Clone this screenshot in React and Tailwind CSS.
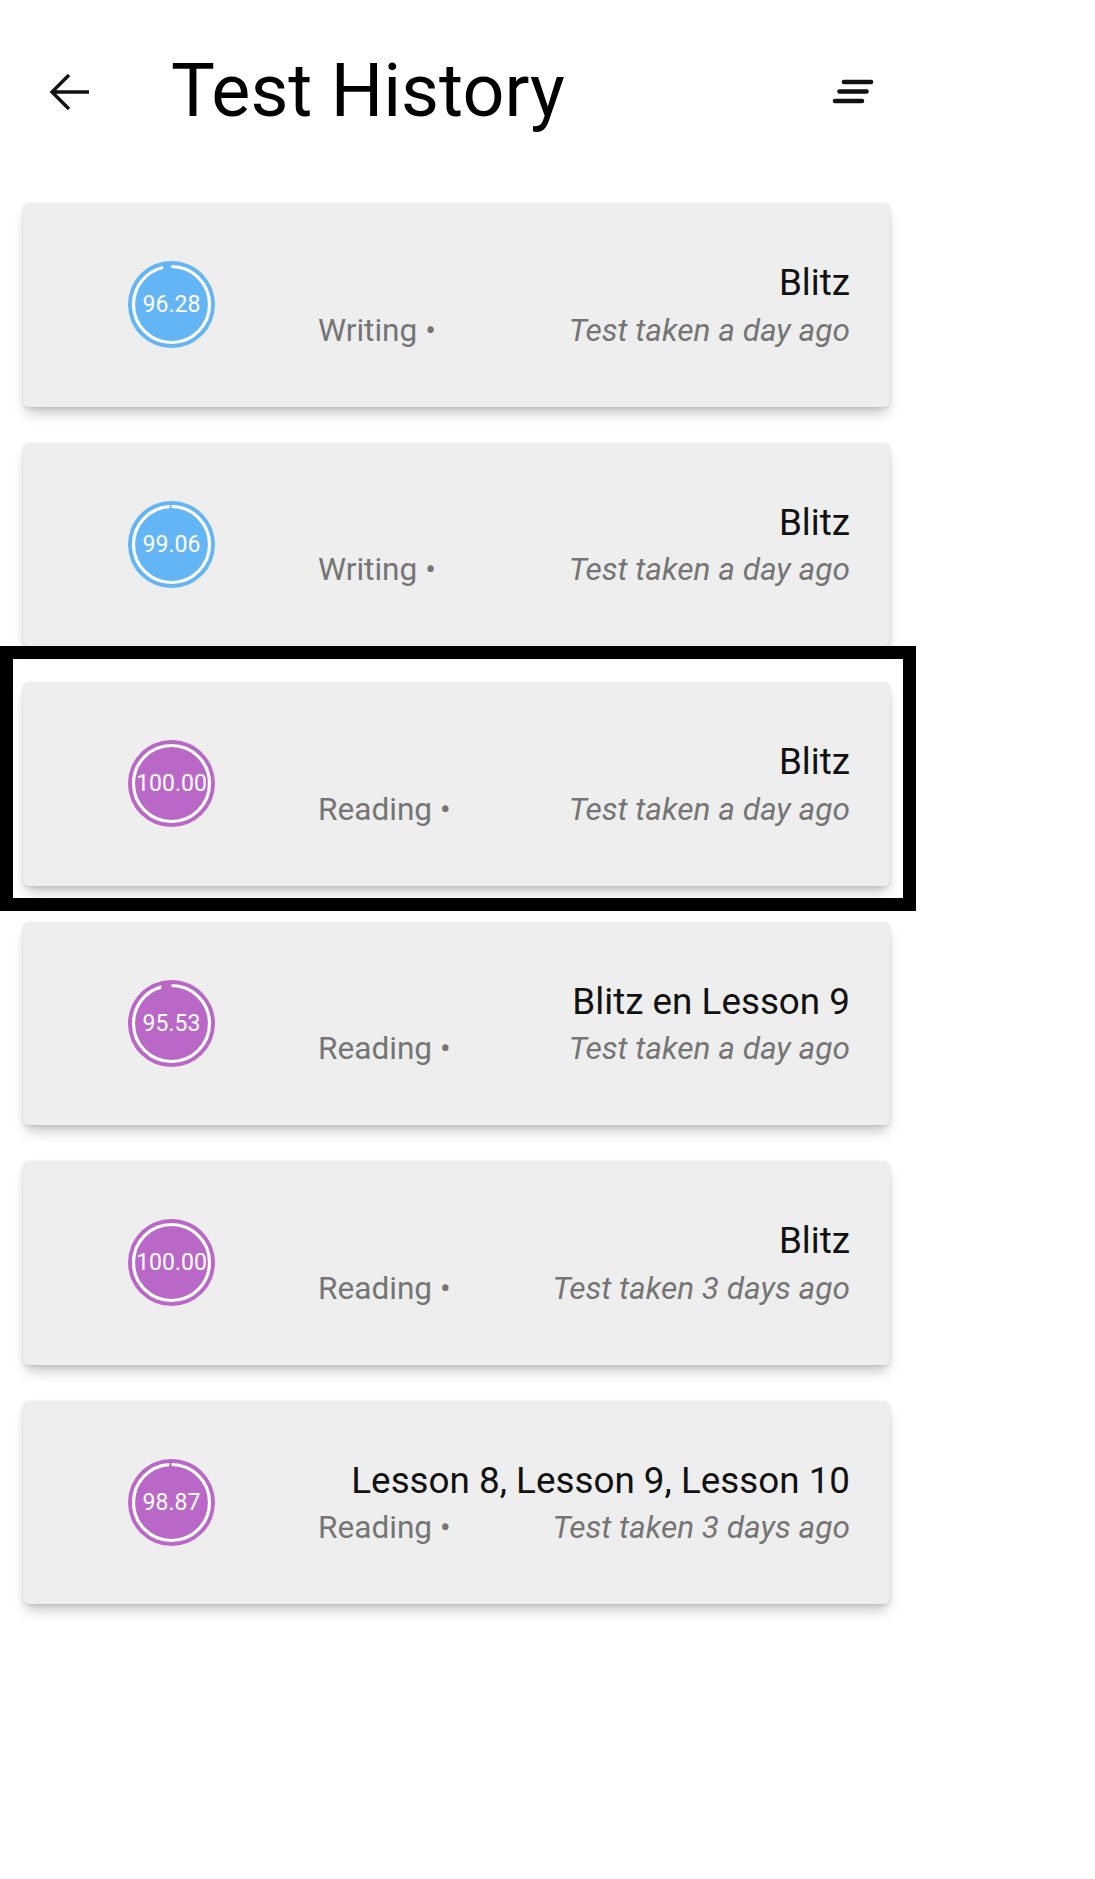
import React from "react";

const BLUE = "#64B5F6";
const PURPLE = "#BA68C8";

const items = [
  { score: "96.28", pct: 96.28, color: BLUE, title: "Blitz", kind: "Writing", when: "Test taken a day ago" },
  { score: "99.06", pct: 99.06, color: BLUE, title: "Blitz", kind: "Writing", when: "Test taken a day ago" },
  { score: "100.00", pct: 100, color: PURPLE, title: "Blitz", kind: "Reading", when: "Test taken a day ago" },
  { score: "95.53", pct: 95.53, color: PURPLE, title: "Blitz en Lesson 9", kind: "Reading", when: "Test taken a day ago" },
  { score: "100.00", pct: 100, color: PURPLE, title: "Blitz", kind: "Reading", when: "Test taken 3 days ago" },
  { score: "98.87", pct: 98.87, color: PURPLE, title: "Lesson 8, Lesson 9, Lesson 10", kind: "Reading", when: "Test taken 3 days ago" },
];

function ScoreCircle({ score, pct, color }) {
  const r = 38;
  const c = 2 * Math.PI * r;
  const len = (pct / 100) * c;
  return (
    <div
      className="relative flex h-[87px] w-[87px] shrink-0 items-center justify-center rounded-full"
      style={{ backgroundColor: color }}
    >
      <svg className="absolute inset-0" width="87" height="87" viewBox="0 0 87 87">
        <circle
          cx="43.5"
          cy="43.5"
          r={r}
          fill="none"
          stroke="#ffffff"
          strokeWidth="3.2"
          strokeDasharray={`${len} ${c}`}
          transform="rotate(-90 43.5 43.5)"
        />
      </svg>
      <span className="relative whitespace-nowrap text-[23px] leading-none text-white">{score}</span>
    </div>
  );
}

function Card({ it }) {
  return (
    <div className="flex h-[203.5px] items-center rounded-[6px] bg-[#eeeeee] pl-[105px] pr-[40px] shadow-[0_9px_13px_-3px_rgba(0,0,0,0.22),0_2px_4px_rgba(0,0,0,0.08),0_0_3px_rgba(0,0,0,0.05)]">
      <ScoreCircle score={it.score} pct={it.pct} color={it.color} />
      <div className="ml-[103px] mt-[2px] flex min-w-0 flex-1 flex-col">
        <div className="whitespace-nowrap text-right text-[36.8px] leading-[42px] text-[#111111]">{it.title}</div>
        <div className="mt-[7.5px] flex items-center justify-between whitespace-nowrap text-[31.6px] leading-[38px] text-[#757575]">
          <span>{it.kind} •</span>
          <span className="italic">{it.when}</span>
        </div>
      </div>
    </div>
  );
}

export default function App() {
  return (
    <div className="relative min-h-[1879px] w-[1095px] bg-white font-[Roboto,sans-serif]">
      <header className="flex h-[184px] items-center pl-[48px] pr-[220px]">
        <svg width="44" height="40" viewBox="0 0 44 40" className="shrink-0">
          <path
            d="M4 20 H41 M21 3 L4 20 L21 37"
            fill="none"
            stroke="#111111"
            strokeWidth="3.4"
            strokeLinecap="butt"
            strokeLinejoin="miter"
          />
        </svg>
        <h1 className="ml-[79px] text-[73.6px] leading-none font-normal text-black">Test History</h1>
        <svg width="44" height="30" viewBox="0 0 44 30" className="ml-auto shrink-0">
          <g stroke="#111111" strokeWidth="4.6" strokeLinecap="round">
            <line x1="13" y1="5" x2="40" y2="5" />
            <line x1="8.5" y1="14.5" x2="35.5" y2="14.5" />
            <line x1="4" y1="24" x2="31" y2="24" />
          </g>
        </svg>
      </header>

      <div className="ml-[23px] flex w-[867px] flex-col gap-[36px] pt-[19px]">
        {items.map((it, i) => (
          <Card key={i} it={it} />
        ))}
      </div>

      <div className="pointer-events-none absolute left-0 top-[646px] h-[265px] w-[916px] border-[13px] border-black" />
    </div>
  );
}
